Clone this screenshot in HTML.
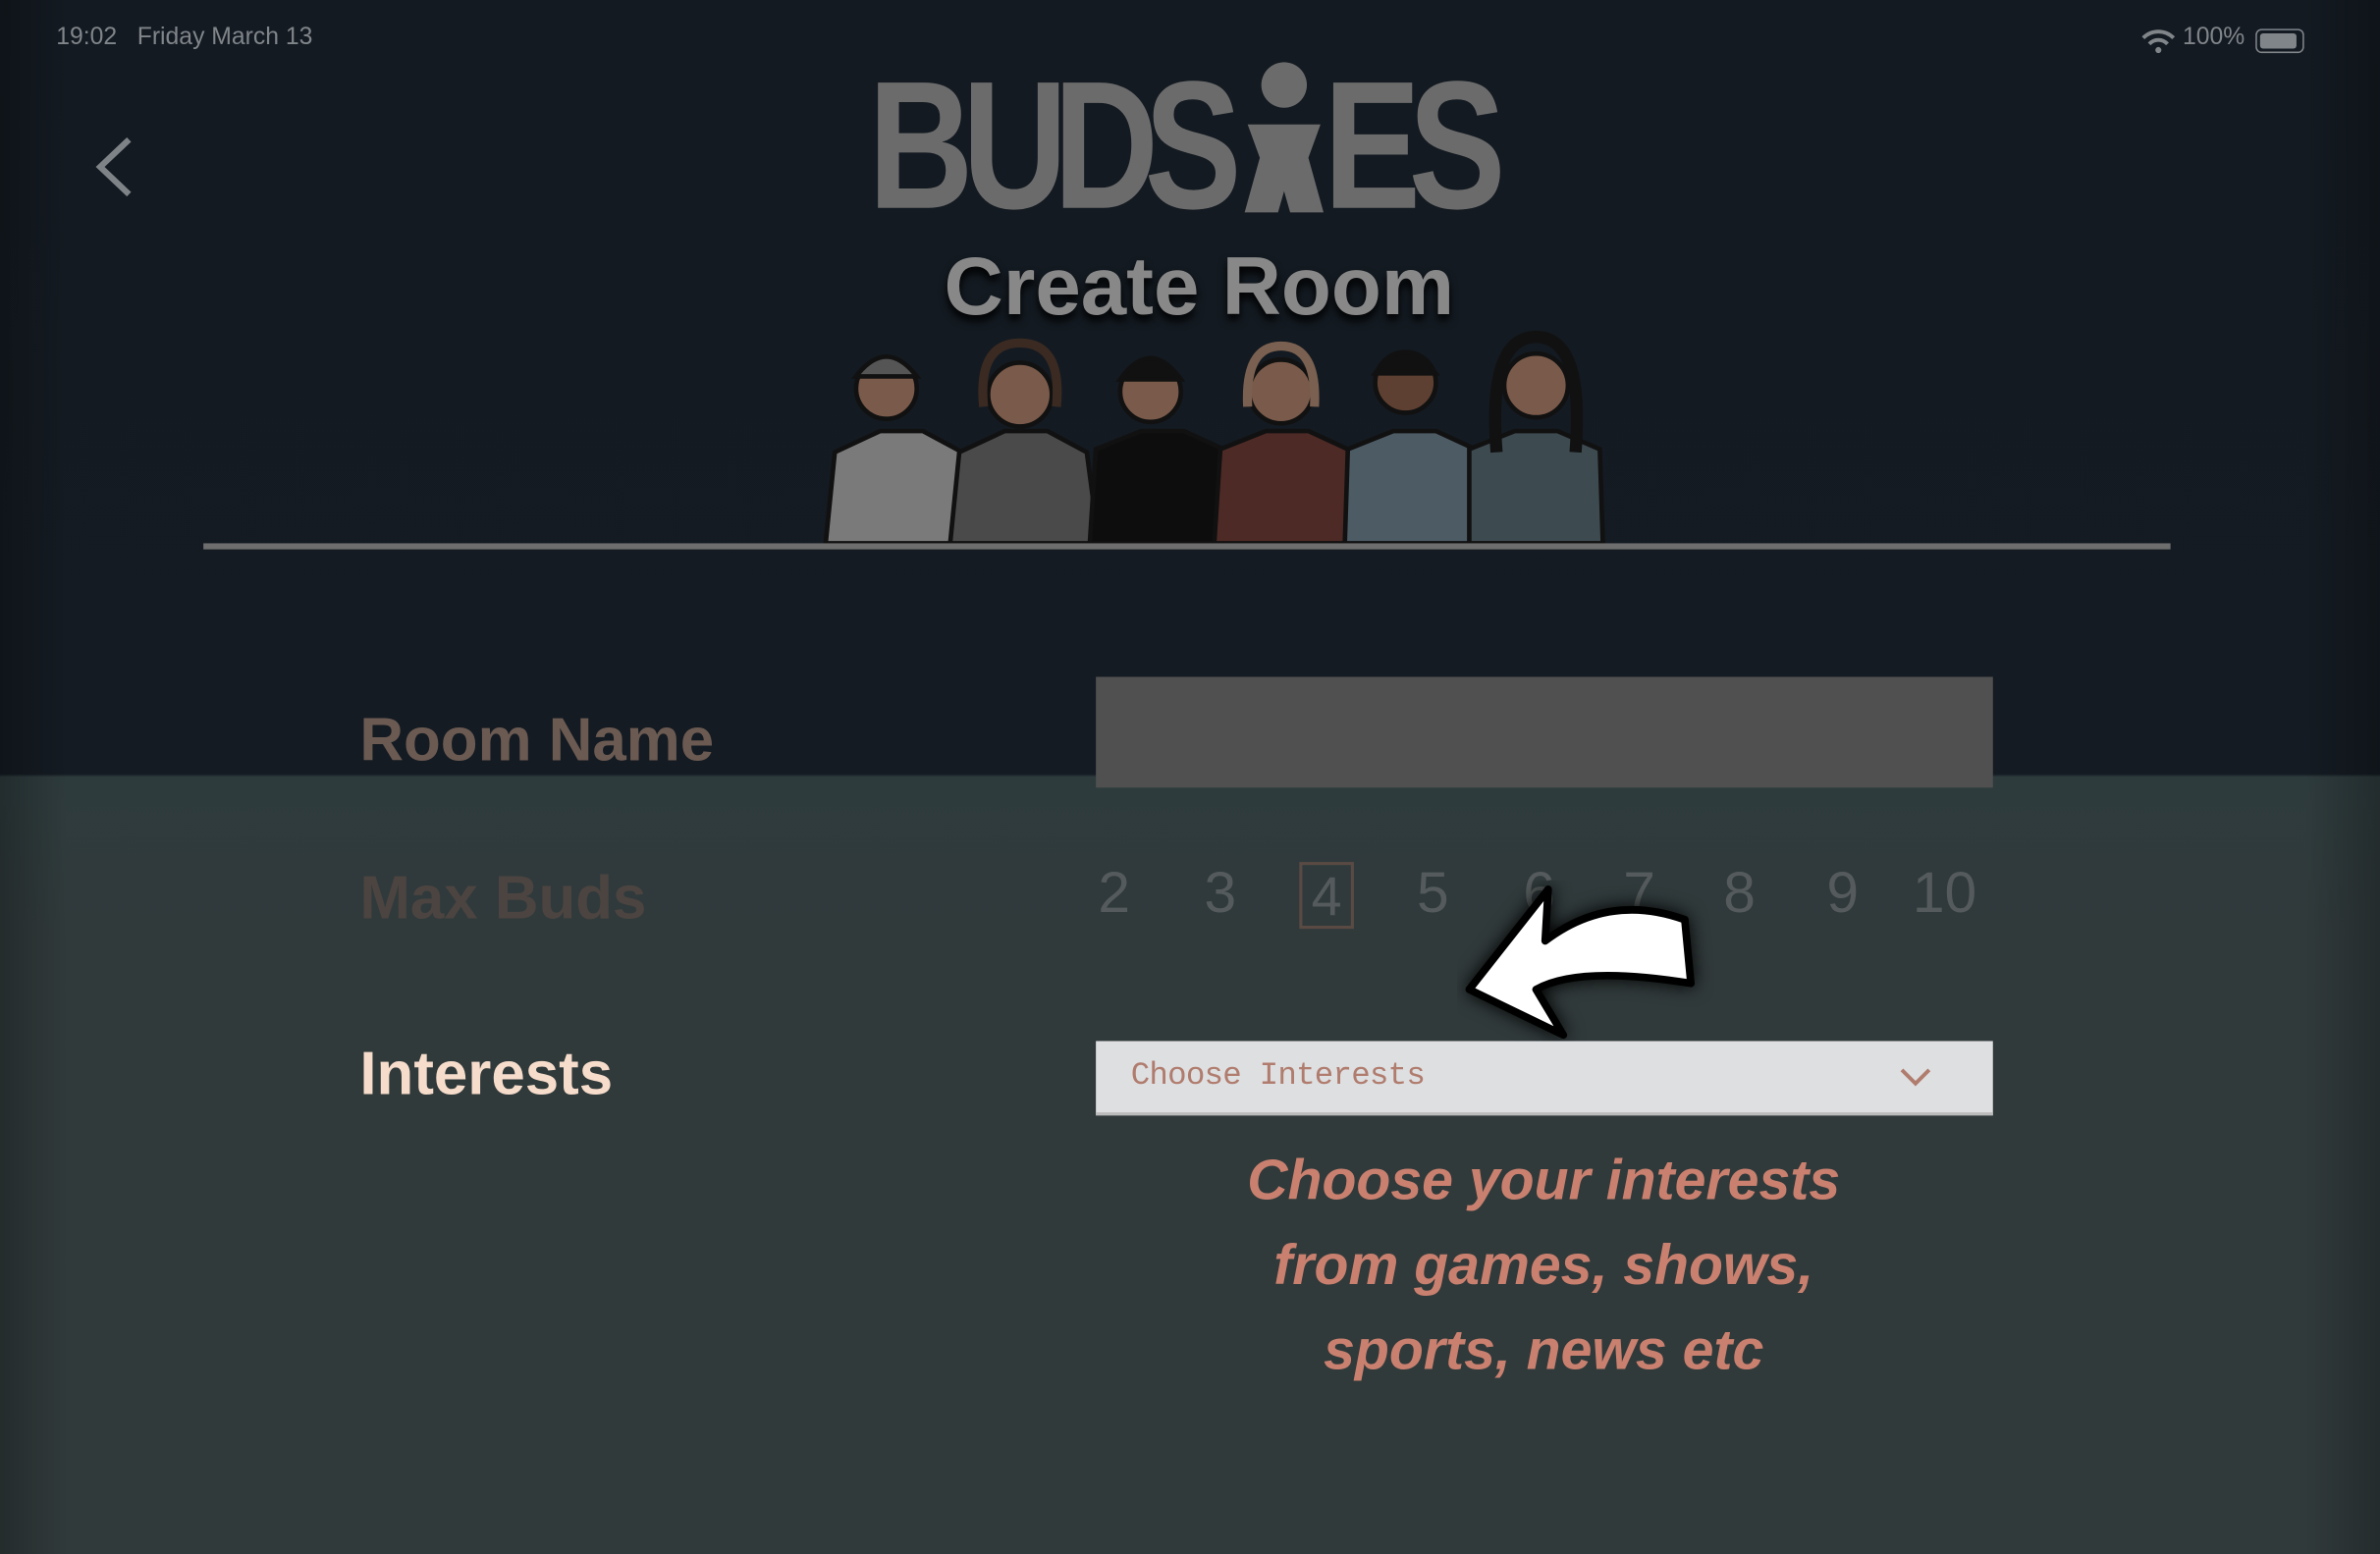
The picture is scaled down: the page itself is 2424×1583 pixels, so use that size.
<!DOCTYPE html>
<html><head><style>
html,body{margin:0;padding:0;width:2424px;height:1582px;overflow:hidden;background:#313a3b}
#w{position:absolute;left:0;top:0;width:1568px;height:1024px;transform:scale(1.5459);transform-origin:0 0;font-family:"Liberation Sans",sans-serif;overflow:hidden;
background:linear-gradient(#131a21 0,#141b22 510px,#2e3b3d 512px,#313a3b 620px,#313a3b 1024px)}
.a{position:absolute;white-space:nowrap}
.n{position:absolute;top:568px;font-size:38px;color:#555b5c;width:36px;text-align:center}
.L{position:absolute;top:46px;width:60px;text-align:center;font-size:120px;font-weight:bold;color:#6b6b6b;line-height:100px;transform:scaleX(0.8)}
</style></head><body><div id="w">
<div class="a" style="left:0;top:0;width:45px;height:1024px;background:linear-gradient(90deg,rgba(0,0,0,.25),rgba(0,0,0,0))"></div>
<div class="a" style="right:0;top:0;width:50px;height:1024px;background:linear-gradient(270deg,rgba(0,0,0,.25),rgba(0,0,0,0))"></div>
<div class="a" style="left:37px;top:16px;font-size:16px;color:#80858a">19:02&nbsp;&nbsp; Friday March 13</div>
<div class="a" style="left:1438px;top:16px;font-size:16px;color:#80858a">100%</div>
<svg class="a" style="left:1410px;top:18px" width="24" height="18" viewBox="0 0 24 18"><path d="M2 7a14 14 0 0 1 20 0M6 11a8 8 0 0 1 12 0" stroke="#80858a" stroke-width="2.5" fill="none"/><circle cx="12" cy="15" r="2" fill="#80858a"/></svg>
<div class="a" style="left:1486px;top:19px;width:30px;height:14px;border:1.5px solid #80858a;border-radius:4px"><div style="margin:2px;height:10px;width:24px;background:#80858a;border-radius:2px"></div></div>
<svg class="a" style="left:60px;top:88px" width="30" height="44"><path d="M25 4L6 22L25 40" stroke="#7e8388" stroke-width="4" fill="none"/></svg>
<div class="L" style="left:566px">B</div>
<div class="L" style="left:628px">U</div>
<div class="L" style="left:688px">D</div>
<div class="L" style="left:748px">S</div>
<div class="L" style="left:866px">E</div>
<div class="L" style="left:922px">S</div>
<svg class="a" style="left:816px;top:40px" width="64" height="104"><circle cx="30" cy="16" r="15" fill="#6b6b6b"/><path d="M6 42h48l-8 22 10 36H34l-4-14-4 14H4l10-36z" fill="#6b6b6b"/></svg>
<div class="a" style="left:622px;top:158px;font-size:54px;font-weight:bold;color:#888;text-shadow:0 4px 6px #000">Create Room</div>
<svg class="a" style="left:540px;top:218px" width="532" height="142">
<g stroke="#111" stroke-width="3">
<path d="M4 140l6-60 30-14 28 0 26 14 8 60z" fill="#7a7a7a"/><circle cx="44" cy="38" r="20" fill="#7a5a4a"/><path d="M24 30q20-26 40 0z" fill="#555"/>
<path d="M86 140l6-60 30-14 28 0 26 14 8 60z" fill="#4a4a4a"/><circle cx="132" cy="42" r="21" fill="#7a5a4a"/><path d="M108 50q-4-42 24-42t24 42" fill="none" stroke="#3a2a22" stroke-width="6"/>
<path d="M178 140l4-62 30-12 28 0 26 12 4 62z" fill="#0d0d0d"/><circle cx="218" cy="40" r="20" fill="#7a5a4a"/><path d="M198 32q20-28 40 0z" fill="#111"/>
<path d="M260 140l4-62 30-12 28 0 26 12 4 62z" fill="#4e2a26"/><circle cx="304" cy="40" r="21" fill="#7a5a4a"/><path d="M282 50q-2-40 22-40t22 40" fill="none" stroke="#7a6050" stroke-width="6"/>
<path d="M346 140l2-62 30-12 28 0 26 12 0 62z" fill="#4d5b64"/><circle cx="386" cy="34" r="20" fill="#5e4032"/><path d="M366 28q20-28 40 0z" fill="#111"/>
<path d="M428 140l0-62 30-12 28 0 28 12 2 62z" fill="#3d4a50"/><circle cx="472" cy="36" r="21" fill="#7a5a4a"/><path d="M446 80q-6-76 26-76t26 76" fill="none" stroke="#111" stroke-width="8"/>
</g></svg>
<div class="a" style="left:134px;top:358px;width:1296px;height:4px;background:#6e6e6e"></div>
<div class="a" style="left:237px;top:466px;font-size:40px;font-weight:bold;color:#6b5a52">Room Name</div>
<div class="a" style="left:722px;top:446px;width:591px;height:73px;background:#505050"></div>
<div class="a" style="left:237px;top:570px;font-size:40px;font-weight:bold;color:#4c4440">Max Buds</div>
<div class="n" style="left:716px">2</div><div class="n" style="left:786px">3</div>
<div class="n" style="left:856px;top:568px;height:44px;border:2px solid #5a4a44;box-sizing:border-box;width:36px;font-size:36px;line-height:42px">4</div>
<div class="n" style="left:926px">5</div><div class="n" style="left:996px">6</div><div class="n" style="left:1062px">7</div><div class="n" style="left:1128px">8</div><div class="n" style="left:1196px">9</div><div class="n" style="left:1260px;width:40px">10</div>
<svg class="a" style="left:960px;top:580px" width="170" height="110"><path d="M60 6L8 72L70 102L52 72Q80 56 154 68L150 26Q100 8 58 40Z" fill="#fff" stroke="#000" stroke-width="5" stroke-linejoin="round" style="filter:drop-shadow(0 0 6px #000)"/></svg>
<div class="a" style="left:237px;top:686px;font-size:40px;font-weight:bold;color:#f6dccb">Interests</div>
<div class="a" style="left:722px;top:686px;width:591px;height:49px;background:#dedfe1;border-bottom:2px solid #bbb;box-sizing:border-box"></div>
<div class="a" style="left:745px;top:698px;font-size:21px;color:#b07c6e;font-family:'Liberation Mono',monospace;letter-spacing:-0.5px">Choose Interests</div>
<svg class="a" style="left:1250px;top:702px" width="24" height="16"><path d="M3 3l9 9 9-9" stroke="#b07c6e" stroke-width="2.5" fill="none"/></svg>
<div class="a" style="left:717px;top:750px;width:600px;text-align:center;font-size:37px;font-weight:bold;font-style:italic;color:#c9806f;line-height:56px">Choose your interests<br>from games, shows,<br>sports, news etc</div>
</div></body></html>
